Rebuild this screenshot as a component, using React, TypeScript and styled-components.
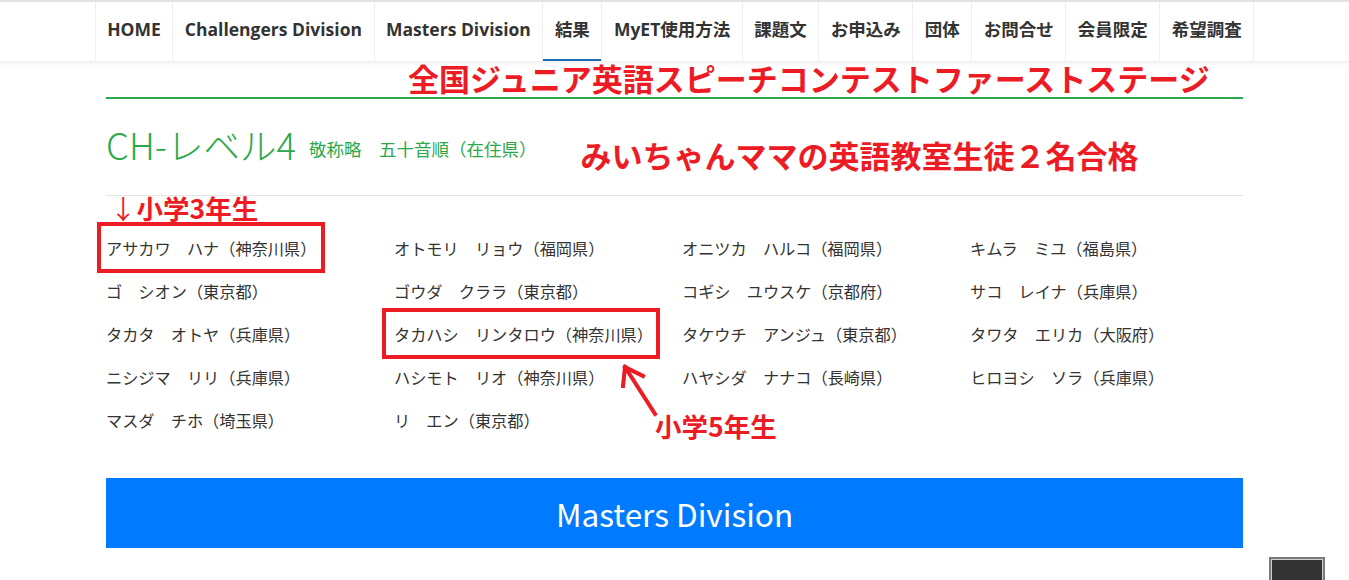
import React from 'react'
import styled, { createGlobalStyle, css } from 'styled-components'

const RED = '#ed1c24'
const GREEN = '#2ba84a'

const GlobalStyle = createGlobalStyle`
	body {
		margin: 0;
		background: #fff;
		font-family: 'Noto Sans CJK JP', 'Noto Sans', sans-serif;
		color: #333;
	}
`

const navItems = [
	'HOME',
	'Challengers Division',
	'Masters Division',
	'結果',
	'MyET使用方法',
	'課題文',
	'お申込み',
	'団体',
	'お問合せ',
	'会員限定',
	'希望調査',
]

type Entry = { name: string; mark?: number; callout?: boolean }

const names: Entry[] = [
	{ name: 'アサカワ　ハナ（神奈川県）', mark: 228 },
	{ name: 'オトモリ　リョウ（福岡県）' },
	{ name: 'オニツカ　ハルコ（福岡県）' },
	{ name: 'キムラ　ミユ（福島県）' },
	{ name: 'ゴ　シオン（東京都）' },
	{ name: 'ゴウダ　クララ（東京都）' },
	{ name: 'コギシ　ユウスケ（京都府）' },
	{ name: 'サコ　レイナ（兵庫県）' },
	{ name: 'タカタ　オトヤ（兵庫県）' },
	{ name: 'タカハシ　リンタロウ（神奈川県）', mark: 278, callout: true },
	{ name: 'タケウチ　アンジュ（東京都）' },
	{ name: 'タワタ　エリカ（大阪府）' },
	{ name: 'ニシジマ　リリ（兵庫県）' },
	{ name: 'ハシモト　リオ（神奈川県）' },
	{ name: 'ハヤシダ　ナナコ（長崎県）' },
	{ name: 'ヒロヨシ　ソラ（兵庫県）' },
	{ name: 'マスダ　チホ（埼玉県）' },
	{ name: 'リ　エン（東京都）' },
]

function App() {
	return (
		<Page>
			<GlobalStyle />
			<NavBar>
				<NavList>
					{navItems.map((item) => (
						<NavItem key={item} active={item === '結果'}>
							{item}
						</NavItem>
					))}
				</NavList>
			</NavBar>
			<Main>
				<Banner>全国ジュニア英語スピーチコンテストファーストステージ</Banner>
				<LevelHeader>
					<LevelTitle>CH-レベル4</LevelTitle>
					<LevelNote>敬称略　五十音順（在住県）</LevelNote>
					<Subtitle>みいちゃんママの英語教室生徒２名合格</Subtitle>
				</LevelHeader>
				<GradeNote>
					<Arrow>↓</Arrow>小学3年生
				</GradeNote>
				<NameGrid>
					{names.map((n) => (
						<NameCell key={n.name}>
							{n.mark && <MarkBox style={{ width: n.mark }} offset={n.callout ? 12 : 9} />}
							{n.name}
							{n.callout && (
								<>
									<CalloutArrow width="40" height="56" viewBox="0 0 40 56">
										<path
											d="M34 52 L4 5 M4 5 L2 24 M4 5 L22 14"
											stroke={RED}
											strokeWidth="4"
											fill="none"
											strokeLinecap="square"
										/>
									</CalloutArrow>
									<CalloutLabel>小学5年生</CalloutLabel>
								</>
							)}
						</NameCell>
					))}
				</NameGrid>
				<DivisionBar>Masters Division</DivisionBar>
			</Main>
			<TopButton aria-label="top" />
		</Page>
	)
}

const Page = styled.div`
	min-height: 700px;
`

const NavBar = styled.nav`
	border-top: 2px solid #e2e2e2;
	height: 59px;
	box-shadow: 0 2px 4px rgba(0, 0, 0, 0.08);
	background: #fff;
`

const NavList = styled.ul`
	display: flex;
	justify-content: center;
	margin: 0;
	padding: 0;
	list-style: none;
	height: 100%;
`

const NavItem = styled('li')<{ active?: boolean }>`
	display: flex;
	align-items: center;
	padding: 0 11.5px 6px;
	border-left: 1px solid #eee;
	font-family: 'Open Sans', 'Noto Sans CJK JP', sans-serif;
	font-size: 17.5px;
	font-weight: 700;
	color: #333;
	box-sizing: border-box;
	&:last-child {
		border-right: 1px solid #eee;
	}
	${(props) =>
		props.active &&
		css`
			box-shadow: inset 0 -2px 0 #1e6bb8;
		`}
`

const Main = styled.main`
	width: 1137px;
	margin: 0 auto;
`

const Banner = styled.h1`
	margin: 0;
	padding: 0 0 2px 302px;
	font-size: 31px;
	line-height: 34px;
	font-weight: 700;
	color: ${RED};
	border-bottom: 2px solid ${GREEN};
	white-space: nowrap;
`

const LevelHeader = styled.div`
	display: flex;
	align-items: flex-start;
	height: 96px;
	border-bottom: 1px solid #e5e5e5;
`

const LevelTitle = styled.h2`
	margin: 22px 0 0;
	font-size: 36.5px;
	line-height: 48px;
	font-weight: 300;
	color: ${GREEN};
`

const LevelNote = styled.span`
	margin: 38px 0 0 13px;
	font-size: 17.5px;
	line-height: 24px;
	color: ${GREEN};
`

const Subtitle = styled.span`
	margin: 36px 0 0 44px;
	font-size: 31px;
	line-height: 40px;
	font-weight: 700;
	color: ${RED};
`

const GradeNote = styled.div`
	padding-left: 4px;
	font-size: 26.5px;
	line-height: 30px;
	font-weight: 700;
	color: ${RED};
	margin-top: -3px;
	margin-bottom: 3px;
`

const Arrow = styled.span`
	font-weight: 400;
`

const NameGrid = styled.div`
	display: grid;
	grid-template-columns: repeat(4, 288px);
	grid-auto-rows: 43px;
`

const NameCell = styled.div`
	position: relative;
	display: flex;
	align-items: center;
	font-size: 16.2px;
	color: #333;
	white-space: nowrap;
`

const MarkBox = styled('span')<{ offset: number }>`
	position: absolute;
	left: ${(props) => -props.offset}px;
	top: -4px;
	height: 51px;
	border: 4px solid ${RED};
	box-sizing: border-box;
`

const CalloutArrow = styled.svg`
	position: absolute;
	left: 227px;
	top: 50px;
`

const CalloutLabel = styled.span`
	position: absolute;
	left: 261px;
	top: 99px;
	font-size: 26.5px;
	line-height: 30px;
	font-weight: 700;
	color: ${RED};
`

const DivisionBar = styled.div`
	margin-top: 37px;
	height: 70px;
	display: flex;
	align-items: center;
	justify-content: center;
	background: #007bff;
	color: #fff;
	font-size: 31.5px;
	font-weight: 400;
`

const TopButton = styled.button`
	position: fixed;
	right: 24px;
	bottom: -33px;
	width: 56px;
	height: 56px;
	padding: 0;
	background: #333;
	border: 2px solid #7a7a7a;
	box-shadow: inset 0 0 0 1px #cfcfcf;
`

export default App
